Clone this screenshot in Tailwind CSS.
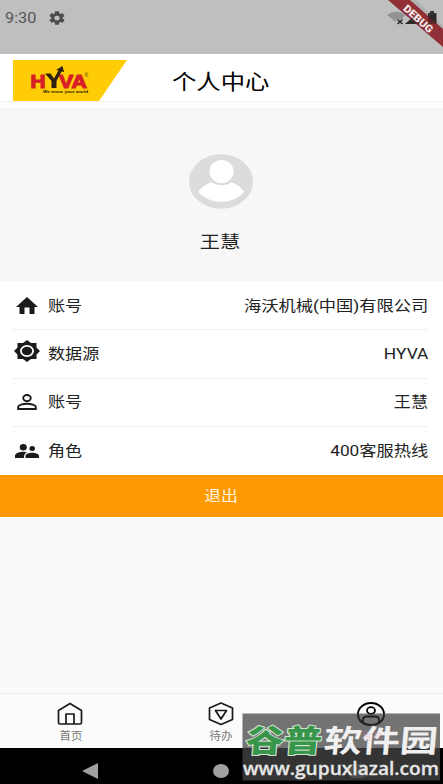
<!DOCTYPE html>
<html lang="zh-CN">
<head>
<meta charset="UTF-8">
<meta name="viewport" content="width=device-width, initial-scale=1">
<title>个人中心</title>
<script src="https://cdn.jsdelivr.net/npm/@tailwindcss/browser@4"></script>
</head>
<body class="bg-[#fafafa]">
<div class="relative flex h-[784px] w-[443px] flex-col overflow-hidden bg-[#fafafa] font-['Roboto','Noto_Sans_CJK_SC',sans-serif] text-[#222]">

  <!-- Status bar -->
  <header class="flex h-[54px] shrink-0 items-start bg-[#bfbfbf] pl-[5px] pt-[9px] text-[#555]">
    <span class="w-[44px] text-[14px] leading-[18px]"><span class="inline-block origin-left scale-x-[1.16]">9:30</span></span>
    <svg class="mt-[2px] h-[14px] w-[16px]" viewBox="2 2 20 20" preserveAspectRatio="none" fill="#4b4b4b"><path d="M19.14 12.94a7 7 0 0 0 0-1.88l2.03-1.58a.5.5 0 0 0 .12-.61l-1.92-3.32a.5.5 0 0 0-.59-.22l-2.39.96a7 7 0 0 0-1.62-.94l-.36-2.54a.5.5 0 0 0-.48-.41h-3.84a.5.5 0 0 0-.47.41l-.36 2.54a7 7 0 0 0-1.62.94l-2.39-.96a.5.5 0 0 0-.59.22L2.74 8.87a.5.5 0 0 0 .12.61l2.03 1.58a7 7 0 0 0 0 1.88l-2.03 1.58a.5.5 0 0 0-.12.61l1.92 3.32c.12.22.37.29.59.22l2.39-.96c.5.38 1.03.7 1.62.94l.36 2.54c.05.24.24.41.48.41h3.84c.24 0 .44-.17.47-.41l.36-2.54a7 7 0 0 0 1.62-.94l2.39.96c.22.08.47 0 .59-.22l1.92-3.32a.5.5 0 0 0-.12-.61zM12 15.3a3.3 3.3 0 1 1 0-6.6 3.3 3.3 0 0 1 0 6.6z"/></svg>
    <svg class="absolute right-0 top-0 h-[54px] w-[83px]" viewBox="0 0 83 54">
      <path d="M27 15C33 10.500 40 10.500 45 15L42 19L36 19L36 22Z" fill="#929292"/>
      <path d="M37.500 19.500l5 4.500M42.500 19.500l-5 4.500" stroke="#222" stroke-width="1.500"/>
      <path d="M45 24L60 11V24Z" fill="#333"/>
      <path d="M68 13h2v-2h4v2h2.500v11H68z" fill="#333"/>
      <path d="M27 -1H55L84 27V47Z" fill="#555" opacity=".13"/>
      <path d="M28 0H50L83 29V47Z" fill="#903036"/>
      <path d="M45 24L56 15L60 19V24ZM68 15h8v9h-8z" fill="#231b1d" opacity=".45"/>
      <text transform="translate(42.500 9.500) rotate(42)" font-family="Roboto" font-weight="900" font-size="10.500" fill="#f1e8e8" textLength="36" lengthAdjust="spacingAndGlyphs">DEBUG</text>
    </svg>
  </header>

  <!-- Title bar -->
  <div class="flex h-[48px] shrink-0 border-b border-[#efefef] bg-white pl-[13px] pt-[6px]">
    <svg class="h-[41px] w-[114px]" viewBox="0 0 114 41">
      <path d="M0 0H114L86 41H0Z" fill="#ffcc05"/>
      <g font-family="Liberation Sans" font-weight="700" font-size="19" stroke-width="1.200">
        <text x="17.500" y="27.500" fill="#d71f27" stroke="#d71f27" textLength="15" lengthAdjust="spacingAndGlyphs">H</text>
        <text x="46" y="27.500" fill="#d71f27" stroke="#d71f27" textLength="28" lengthAdjust="spacingAndGlyphs">VA</text>
      </g>
      <path d="M32 13.500H37.500L41 18.500L45.500 10.500L43 10L49.500 6L51 12L48.500 11.500L43.500 21V28H38.500V21Z" fill="#2d2114"/>
      <text x="71.500" y="17" font-family="Liberation Sans" font-size="5" fill="#33260a">®</text>
      <text x="30" y="33" font-family="Liberation Sans" font-size="4.300" font-weight="700" fill="#211b08" textLength="45" lengthAdjust="spacingAndGlyphs">We move your world</text>
    </svg>
    <h1 class="ml-[45px] mt-[7px] origin-left scale-x-[1.16] whitespace-nowrap text-[21px] leading-[30px] text-black">个人中心</h1>
  </div>
  <div class="h-[6px] shrink-0 bg-[#fdfdfd]"></div>

  <!-- Profile -->
  <section class="flex h-[173px] shrink-0 flex-col items-center bg-[#f7f7f7] pt-[46px]">
    <svg class="-ml-[1px] h-[55px] w-[64px]" viewBox="0 0 64 55">
      <ellipse cx="32" cy="27.500" rx="32" ry="27.300" fill="#dcdcdc"/>
      <path d="M9 38C13 32 19 29 23 28.500C29 32 37 32 42 28.500C47 29 52 33 55 38C43 51 21 51 9 38Z" fill="#fff"/>
      <ellipse cx="32.500" cy="18" rx="13.500" ry="13" fill="#dcdcdc"/>
      <ellipse cx="32.500" cy="17.500" rx="12" ry="11.500" fill="#fff"/>
    </svg>
    <div class="mt-[20px] -translate-x-[1.5px] scale-x-[1.16] text-[17.5px] leading-[26px]">王慧</div>
  </section>

  <!-- Account details -->
  <section class="h-[194px] shrink-0 bg-white pl-[13px] pr-[15px] pt-px text-[15px] leading-[22px]">
    <div class="flex h-[48.3px] items-center border-b border-[#efefef]">
      <svg class="ml-[3px] h-[17px] w-[22px]" viewBox="0 0 22 17"><path d="M11 0L22 10H18.500V17H13.500V10.500H8.500V17H3.500V10H0Z" fill="#1b1b1b"/></svg>
      <span class="ml-[10px] origin-left scale-x-[1.14]">账号</span>
      <span class="ml-auto origin-right scale-x-[1.15] whitespace-nowrap">海沃机械(中国)有限公司</span>
    </div>
    <div class="flex h-[48.3px] items-center border-b border-[#efefef]">
      <svg class="-mt-[5px] ml-px h-[22px] w-[26px]" viewBox="0 0 26 22"><path d="M13 0L17 3H22.500V7.500L26 11L22.500 14.500V19H17L13 22L9 19H3.500V14.500L0 11L3.500 7.500V3H9Z" fill="#1b1b1b"/><ellipse cx="13" cy="11" rx="6.100" ry="5.200" fill="none" stroke="#fff" stroke-width="1.800"/></svg>
      <span class="ml-[8px] origin-left scale-x-[1.14]">数据源</span>
      <span class="ml-auto origin-right scale-x-[1.16]">HYVA</span>
    </div>
    <div class="flex h-[48.3px] items-center border-b border-[#efefef]">
      <svg class="ml-[4px] h-[16px] w-[20px]" viewBox="0 0 20 16" fill="none" stroke="#1b1b1b" stroke-width="1.900"><ellipse cx="10" cy="4.100" rx="3.800" ry="3.100"/><path d="M1.200 15V13C1.200 11 6 9.700 10 9.700S18.800 11 18.800 13V15Z"/></svg>
      <span class="ml-[11px] origin-left scale-x-[1.14]">账号</span>
      <span class="ml-auto origin-right scale-x-[1.14]">王慧</span>
    </div>
    <div class="flex h-[48.3px] items-center">
      <svg class="ml-[2px] h-[14px] w-[24px]" viewBox="0 0 24 14" fill="#1b1b1b"><ellipse cx="8.300" cy="3.200" rx="3.500" ry="3.200"/><ellipse cx="17.200" cy="4.500" rx="2.800" ry="2.500"/><path d="M0 14V11.500C0 9 5 7.700 8.500 7.700C10 7.700 11 7.900 12 8.200C9.500 9.500 9 11 9 14ZM10.500 14V12C10.500 9.700 14 8.700 17 8.700S24 9.700 24 12V14Z"/></svg>
      <span class="ml-[9px] origin-left scale-x-[1.14]">角色</span>
      <span class="ml-auto origin-right scale-x-[1.15]">400客服热线</span>
    </div>
  </section>

  <button class="flex h-[42px] shrink-0 items-center justify-center bg-[#ff9901] pt-px text-[15px] text-[#fff8e8]"><span class="scale-x-[1.12]">退出</span></button>

  <!-- Tab bar -->
  <nav class="mt-auto grid h-[55px] shrink-0 grid-cols-[141px_159px_141px] border-t border-[#eeeeee] bg-[#fbfbfb] pt-[8px] text-[11px] leading-[16px] text-[#777]">
    <div class="flex flex-col items-center">
      <svg class="-ml-[2px] h-[24px] w-[26px]" viewBox="0 0 26 24" fill="none" stroke="#191919" stroke-width="1.700" stroke-linejoin="round"><path d="M1.500 8.500L13 1.500L24.500 8.500V20.500Q24.500 22 23 22H3Q1.500 22 1.500 20.500Z"/><path d="M9 22V12H17V22"/></svg>
      <span class="mt-[3px] scale-x-[1.04]">首页</span>
    </div>
    <div class="flex flex-col items-center">
      <svg class="h-[24px] w-[26px]" viewBox="0 0 26 24" fill="none" stroke="#191919" stroke-width="1.700" stroke-linejoin="round"><path d="M13 1L24.500 6V17.500L13 22.500L1.500 17.500V6Z"/><path d="M7.500 8.500H18.500L13 17Z"/></svg>
      <span class="mt-[3px] scale-x-[1.04]">待办</span>
    </div>
    <div class="flex flex-col items-center">
      <svg class="h-[24px] w-[28px]" viewBox="0 0 28 24" fill="none" stroke="#000" stroke-width="1.800"><ellipse cx="14" cy="12" rx="13" ry="11"/><ellipse cx="14" cy="8.500" rx="4" ry="3.300"/><path d="M6 20.500V18Q6 14.500 10 14.500H18Q22 14.500 22 18V20.500"/></svg>
    </div>
  </nav>

  <!-- System navigation -->
  <footer class="flex h-[36px] shrink-0 items-center bg-black pl-[82px] pt-[10px]">
    <svg class="h-[16px] w-[16px]" viewBox="0 0 16 16"><path d="M0 8L16 0V16Z" fill="#a0a0a0"/></svg>
    <span class="ml-[115px] h-[14px] w-[16px] rounded-[50%] bg-[#a0a0a0]"></span>
    <span class="ml-[121px] h-[14px] w-[16px] rounded-sm bg-[#a0a0a0]/60"></span>
  </footer>

  <!-- Site watermark -->
  <svg class="absolute left-[242px] top-[713px] h-[68px] w-[200px]" viewBox="0 0 200 68">
    <rect x=".5" y=".5" width="197.500" height="67" fill="#464646" fill-opacity=".75"/>
    <path d="M115.800 2C117 9 122 12 129 12S141 9 142.300 2M121 9.500V6.500Q121 3.500 125 3.500H133Q137 3.500 137 6.500V9.500" fill="none" stroke="#222" stroke-width="1.600"/>
    <g font-family="Noto Sans CJK SC" font-weight="900" font-size="31" stroke-linejoin="round" paint-order="stroke">
      <g transform="translate(0 39) skewX(-5)">
        <text x="3" y="0" fill="#37964a" stroke="#d5e3d6" stroke-width="2" textLength="76" lengthAdjust="spacingAndGlyphs">谷普</text>
        <text x="81" y="0" fill="#f0f0f0" font-weight="700" textLength="114" lengthAdjust="spacingAndGlyphs">软件园</text>
      </g>
    </g>
    <text x="1" y="61.500" font-family="Open Sans" font-weight="600" font-size="18" fill="#e6e6e6" stroke="#e6e6e6" stroke-width=".3" textLength="196" lengthAdjust="spacingAndGlyphs">www.gupuxlazal.com</text>
    <text x="119" y="27" font-family="Noto Sans CJK SC" font-size="10.500" fill="#e08aa0" fill-opacity=".35">我的</text>
  </svg>
</div>
</body>
</html>
